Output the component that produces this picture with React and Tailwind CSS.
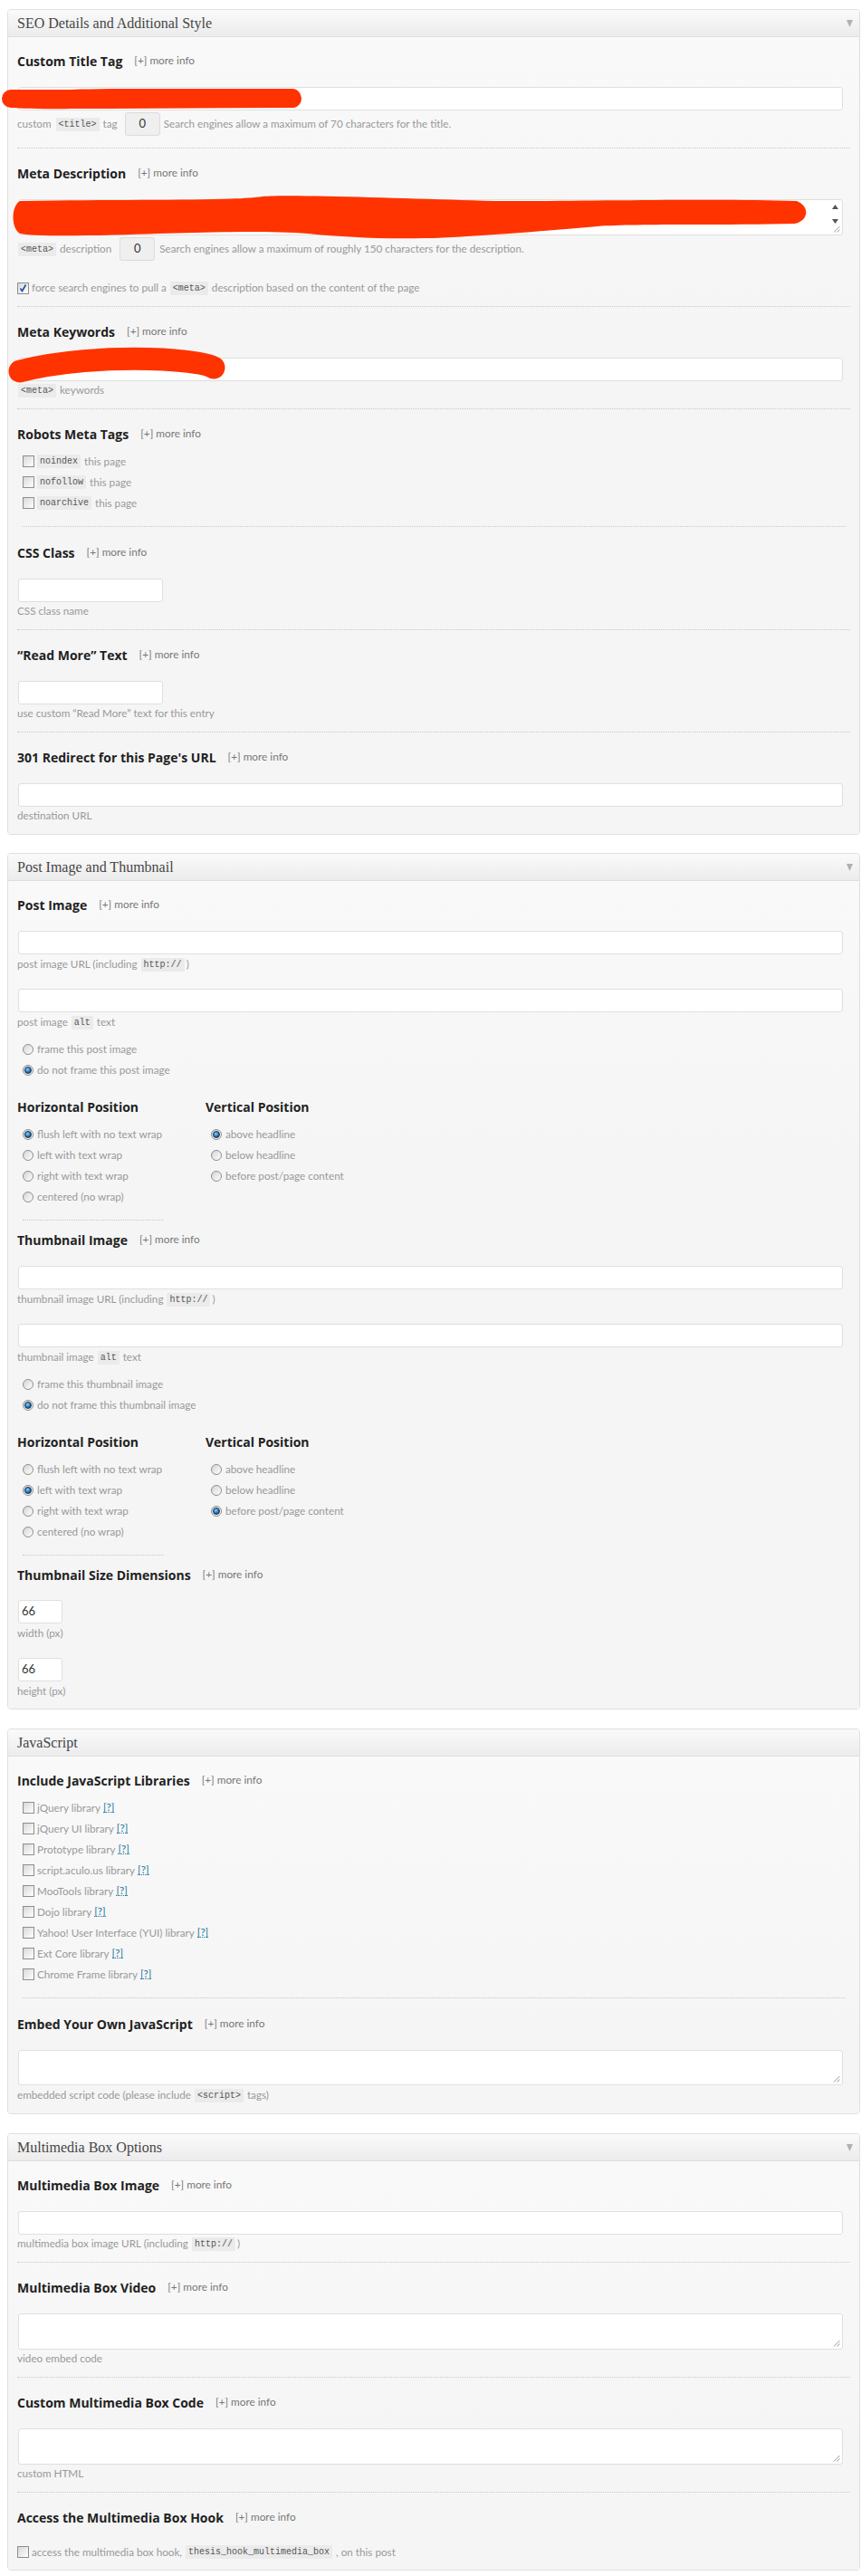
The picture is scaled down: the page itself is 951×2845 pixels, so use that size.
import React from "react";

const Label = ({ children, noInfo }) => (
  <div className="flex items-center h-[18px] whitespace-nowrap">
    <span className="font-['Open_Sans',sans-serif] font-bold text-[14px] text-[#222]">{children}</span>
    {!noInfo && <span className="ml-[13px] text-[11.8px] text-[#777]">[+] more info</span>}
  </div>
);

const SubHead = ({ children }) => (
  <div className="flex items-center h-[18px] whitespace-nowrap">
    <span className="font-['Open_Sans',sans-serif] font-bold text-[14px] text-[#222]">{children}</span>
  </div>
);

const Code = ({ children, className = "" }) => (
  <span className={"inline-flex items-center h-[15px] px-[3px] bg-[#ebebeb] text-[#555] font-['Liberation_Mono',monospace] text-[10px] " + className}>
    {children}
  </span>
);

const Help = ({ children, className = "" }) => (
  <div className={"flex items-center h-[16px] text-[11.7px] text-[#999] whitespace-nowrap " + className}>{children}</div>
);

const Input = ({ className = "", value }) => (
  <div className={"h-[26px] bg-white border border-[#dfdfdf] rounded-[3px] ml-[1px] flex items-center pl-[3px] text-[13px] text-[#333] " + className}>
    {value}
  </div>
);

const Grip = () => (
  <svg width="8" height="8" viewBox="0 0 8 8" className="absolute right-[2px] bottom-[2px]">
    <line x1="7.5" y1="1" x2="1" y2="7.5" stroke="#999" strokeWidth="1" />
    <line x1="7.5" y1="4.5" x2="4.5" y2="7.5" stroke="#999" strokeWidth="1" />
  </svg>
);

const TextArea = ({ h = "h-[40px]", scroll }) => (
  <div className={"relative bg-white border border-[#dfdfdf] rounded-[3px] ml-[1px] mr-[8px] " + h}>
    {scroll && (
      <>
        <svg width="7" height="5" viewBox="0 0 7 5" className="absolute right-[4px] top-[5px]">
          <polygon points="3.5,0 7,5 0,5" fill="#555" />
        </svg>
        <svg width="7" height="5" viewBox="0 0 7 5" className="absolute right-[4px] bottom-[12px]">
          <polygon points="0,0 7,0 3.5,5" fill="#555" />
        </svg>
      </>
    )}
    <Grip />
  </div>
);

const Divider = ({ className = "" }) => (
  <div className={"h-0 border-t border-dotted border-[#c8c8c8] " + className} />
);

const Checkbox = ({ checked }) => (
  <span className="relative inline-flex shrink-0 w-[13px] h-[13px] border border-[#8e8e8e] bg-[linear-gradient(135deg,#d8d8d8,#ffffff)]">
    {checked && (
      <svg width="11" height="11" viewBox="0 0 11 11" className="absolute left-0 top-0">
        <path d="M2.5 5.5 L4.5 8.5 L8.5 1.5" stroke="#1d4f9c" strokeWidth="1.6" fill="none" />
      </svg>
    )}
  </span>
);

const Radio = ({ checked }) => (
  <span className="inline-flex shrink-0 items-center justify-center w-[12px] h-[12px] rounded-full border border-[#8e8e8e] bg-[linear-gradient(135deg,#d4d4d4,#ffffff)]">
    {checked && (
      <span className="w-[8px] h-[8px] rounded-full border border-[#0f3158] bg-[radial-gradient(circle_at_40%_35%,#8fd3ff,#1e6aa8_60%,#123e6e)]" />
    )}
  </span>
);

const CheckRow = ({ checked, children, className = "" }) => (
  <div className={"flex items-center h-[23px] text-[11.7px] text-[#999] whitespace-nowrap " + className}>
    <Checkbox checked={checked} />
    <span className="ml-[3px] flex items-center">{children}</span>
  </div>
);

const RadioRow = ({ checked, children }) => (
  <div className="flex items-center h-[23px] text-[11.7px] text-[#999] whitespace-nowrap">
    <Radio checked={checked} />
    <span className="ml-[4px]">{children}</span>
  </div>
);

const Q = () => (
  <span className="ml-[3px] text-[#21759b] border-b border-dotted border-[#21759b] leading-[11px]">[?]</span>
);

const Count = ({ className = "" }) => (
  <span className={"inline-flex items-center justify-center w-[39px] h-[26px] bg-[#efefef] border border-[#dcdcdc] rounded-[3px] text-[13px] text-[#333] " + className}>
    0
  </span>
);

const Panel = ({ title, arrow = true, children, className = "", pb = "pb-[12px]" }) => (
  <div className={"border border-[#dfdfdf] rounded-[4px] overflow-hidden " + className}>
    <div className="h-[30px] border-b border-[#dfdfdf] bg-[linear-gradient(to_bottom,#fafafa,#ececec)] flex items-center justify-between pl-[10px] pr-[7px]">
      <span className="font-['Liberation_Serif',serif] text-[16px] text-[#464646] whitespace-nowrap">{title}</span>
      {arrow && (
        <svg width="7" height="8" viewBox="0 0 7 8">
          <polygon points="0,0 7,0 3.5,8" fill="#b0b0b0" />
        </svg>
      )}
    </div>
    <div className={"bg-[linear-gradient(to_bottom,#f9f9f9,#f5f5f5_320px)] px-[10px] pt-[17px] " + pb}>{children}</div>
  </div>
);

const PositionColumns = ({ h, v }) => (
  <div className="flex mt-[20px]">
    <div className="w-[208px]">
      <SubHead>Horizontal Position</SubHead>
      <div className="mt-[10px] pl-[6px]">
        {["flush left with no text wrap", "left with text wrap", "right with text wrap", "centered (no wrap)"].map((t, i) => (
          <RadioRow key={t} checked={i === h}>{t}</RadioRow>
        ))}
      </div>
    </div>
    <div>
      <SubHead>Vertical Position</SubHead>
      <div className="mt-[10px] pl-[6px]">
        {["above headline", "below headline", "before post/page content"].map((t, i) => (
          <RadioRow key={t} checked={i === v}>{t}</RadioRow>
        ))}
      </div>
    </div>
  </div>
);

export default function App() {
  return (
    <div className="relative bg-white font-['Lato',sans-serif] pl-[8px] pr-[1px] pt-[10px] pb-[2px]">
      {/* SEO panel */}
      <Panel title="SEO Details and Additional Style">
        <Label>Custom Title Tag</Label>
        <Input className="mt-[20px] mr-[8px]" />
        <div className="mt-[2px] h-[26px] flex items-center text-[11.7px] text-[#999] whitespace-nowrap">
          <span>custom</span>
          <Code className="ml-[5px] mr-[4px]">&lt;title&gt;</Code>
          <span>tag</span>
          <Count className="ml-[8px] mr-[4px]" />
          <span>Search engines allow a maximum of 70 characters for the title.</span>
        </div>
        <Divider className="mt-[13px]" />

        <div className="mt-[18px]"><Label>Meta Description</Label></div>
        <div className="mt-[20px]"><TextArea scroll /></div>
        <div className="mt-[2px] h-[26px] flex items-center text-[11.7px] text-[#999] whitespace-nowrap">
          <Code className="ml-[1px] mr-[4px]">&lt;meta&gt;</Code>
          <span>description</span>
          <Count className="ml-[9px] mr-[5px]" />
          <span>Search engines allow a maximum of roughly 150 characters for the description.</span>
        </div>
        <div className="mt-[21px] flex items-center h-[18px] text-[11.7px] text-[#999] whitespace-nowrap">
          <Checkbox checked />
          <span className="ml-[3px]">force search engines to pull a</span>
          <Code className="mx-[4px]">&lt;meta&gt;</Code>
          <span>description based on the content of the page</span>
        </div>
        <Divider className="mt-[11px]" />

        <div className="mt-[18px]"><Label>Meta Keywords</Label></div>
        <Input className="mt-[20px] mr-[8px]" />
        <Help className="mt-[2px]">
          <Code className="ml-[1px] mr-[4px]">&lt;meta&gt;</Code>
          <span>keywords</span>
        </Help>
        <Divider className="mt-[12px]" />

        <div className="mt-[18px]"><Label>Robots Meta Tags</Label></div>
        <div className="mt-[10px] pl-[6px]">
          {["noindex", "nofollow", "noarchive"].map((t) => (
            <CheckRow key={t}>
              <Code className="mr-[4px]">{t}</Code>
              <span>this page</span>
            </CheckRow>
          ))}
        </div>
        <Divider className="mt-[14px] ml-[6px] mr-[5px]" />

        <div className="mt-[19px]"><Label>CSS Class</Label></div>
        <Input className="mt-[20px] w-[160px]" />
        <Help className="mt-[2px]">CSS class name</Help>
        <Divider className="mt-[12px]" />

        <div className="mt-[18px]"><Label>“Read More” Text</Label></div>
        <Input className="mt-[20px] w-[160px]" />
        <Help className="mt-[2px]">use custom “Read More” text for this entry</Help>
        <Divider className="mt-[12px]" />

        <div className="mt-[18px]"><Label>301 Redirect for this Page's URL</Label></div>
        <Input className="mt-[20px] mr-[8px]" />
        <Help className="mt-[2px]">destination URL</Help>
      </Panel>

      {/* Post Image panel */}
      <Panel title="Post Image and Thumbnail" className="mt-[20px]" pb="pb-[11px]">
        <Label>Post Image</Label>
        <Input className="mt-[20px] mr-[8px]" />
        <Help className="mt-[3px]">
          <span>post image URL (including</span>
          <Code className="ml-[4px] mr-[2px]">http://</Code>
          <span>)</span>
        </Help>
        <Input className="mt-[19px] mr-[8px]" />
        <Help className="mt-[3px]">
          <span>post image</span>
          <Code className="mx-[4px]">alt</Code>
          <span>text</span>
        </Help>
        <div className="mt-[10px] pl-[6px]">
          <RadioRow>frame this post image</RadioRow>
          <RadioRow checked>do not frame this post image</RadioRow>
        </div>
        <PositionColumns h={0} v={0} />
        <Divider className="mt-[14px] ml-[6px] w-[156px]" />

        <div className="mt-[12px]"><Label>Thumbnail Image</Label></div>
        <Input className="mt-[20px] mr-[8px]" />
        <Help className="mt-[3px]">
          <span>thumbnail image URL (including</span>
          <Code className="ml-[4px] mr-[2px]">http://</Code>
          <span>)</span>
        </Help>
        <Input className="mt-[19px] mr-[8px]" />
        <Help className="mt-[3px]">
          <span>thumbnail image</span>
          <Code className="mx-[4px]">alt</Code>
          <span>text</span>
        </Help>
        <div className="mt-[10px] pl-[6px]">
          <RadioRow>frame this thumbnail image</RadioRow>
          <RadioRow checked>do not frame this thumbnail image</RadioRow>
        </div>
        <PositionColumns h={1} v={2} />
        <Divider className="mt-[14px] ml-[6px] w-[156px]" />

        <div className="mt-[12px]"><Label>Thumbnail Size Dimensions</Label></div>
        <Input className="mt-[19px] w-[49px]" value="66" />
        <Help className="mt-[3px]">width (px)</Help>
        <Input className="mt-[19px] w-[49px]" value="66" />
        <Help className="mt-[3px]">height (px)</Help>
      </Panel>

      {/* JavaScript panel */}
      <Panel title="JavaScript" arrow={false} className="mt-[21px]">
        <Label>Include JavaScript Libraries</Label>
        <div className="mt-[10px] pl-[6px]">
          {[
            "jQuery library",
            "jQuery UI library",
            "Prototype library",
            "script.aculo.us library",
            "MooTools library",
            "Dojo library",
            "Yahoo! User Interface (YUI) library",
            "Ext Core library",
            "Chrome Frame library",
          ].map((t) => (
            <CheckRow key={t}>
              <span>{t}</span>
              <Q />
            </CheckRow>
          ))}
        </div>
        <Divider className="mt-[14px] ml-[6px] mr-[5px]" />

        <div className="mt-[19px]"><Label>Embed Your Own JavaScript</Label></div>
        <div className="mt-[20px]"><TextArea h="h-[39px]" /></div>
        <Help className="mt-[3px]">
          <span>embedded script code (please include</span>
          <Code className="mx-[4px]">&lt;script&gt;</Code>
          <span>tags)</span>
        </Help>
      </Panel>

      {/* Multimedia panel */}
      <Panel title="Multimedia Box Options" className="mt-[21px]" pb="pb-[8px]">
        <Label>Multimedia Box Image</Label>
        <Input className="mt-[20px] mr-[8px]" />
        <Help className="mt-[2px]">
          <span>multimedia box image URL (including</span>
          <Code className="ml-[4px] mr-[2px]">http://</Code>
          <span>)</span>
        </Help>
        <Divider className="mt-[12px]" />

        <div className="mt-[18px]"><Label>Multimedia Box Video</Label></div>
        <div className="mt-[20px]"><TextArea /></div>
        <Help className="mt-[2px]">video embed code</Help>
        <Divider className="mt-[12px]" />

        <div className="mt-[18px]"><Label>Custom Multimedia Box Code</Label></div>
        <div className="mt-[20px]"><TextArea /></div>
        <Help className="mt-[2px]">custom HTML</Help>
        <Divider className="mt-[12px]" />

        <div className="mt-[18px]"><Label>Access the Multimedia Box Hook</Label></div>
        <CheckRow className="mt-[18px]">
          <span>access the multimedia box hook,</span>
          <Code className="mx-[4px]">thesis_hook_multimedia_box</Code>
          <span>, on this post</span>
        </CheckRow>
      </Panel>

      {/* redaction marks */}
      <svg className="absolute left-0 top-0 pointer-events-none" width="951" height="440" viewBox="0 0 951 440">
        <path d="M12 106 C 40 97, 120 98, 200 98 L 323 98 C 335 98, 336 118, 323 119 L 120 120 C 60 120, 20 121, 10 118 C 0 114, 0 102, 12 106 Z" fill="#ff3300" />
        <path d="M12 109 L 323 109" stroke="#ff3300" strokeWidth="20" strokeLinecap="round" />
        <path d="M22 222 C 150 220, 260 222, 290 217 C 330 214, 480 221, 560 222 C 650 222, 800 219, 880 222 C 895 228, 893 244, 878 247 C 800 249, 700 247, 660 250 C 600 255, 520 262, 470 263 C 420 264, 380 262, 340 258 C 300 255, 230 256, 175 258 C 120 260, 40 262, 22 258 C 12 252, 12 228, 22 222 Z" fill="#ff3300" />
        <path d="M22 410 C 60 400, 120 394, 180 397 C 210 399, 230 402, 236 406" stroke="#ff3300" strokeWidth="25" strokeLinecap="round" fill="none" />
      </svg>
    </div>
  );
}
